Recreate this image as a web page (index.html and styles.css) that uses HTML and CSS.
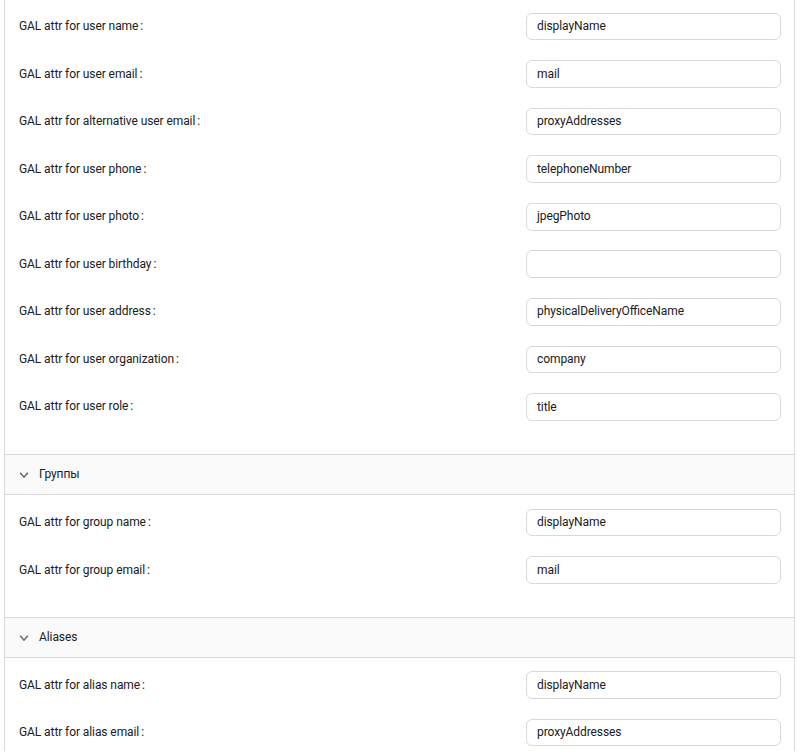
FILE: index.html
```html
<!DOCTYPE html>
<html lang="en"><head><meta charset="utf-8"><title>GAL attributes</title><link rel="stylesheet" href="styles.css"></head>
<body>
<main class="collapse">
<section class="fields users">
<div class="row"><label>GAL attr for user name</label><div class="input">displayName</div></div>
<div class="row"><label>GAL attr for user email</label><div class="input">mail</div></div>
<div class="row"><label>GAL attr for alternative user email</label><div class="input">proxyAddresses</div></div>
<div class="row"><label>GAL attr for user phone</label><div class="input">telephoneNumber</div></div>
<div class="row"><label>GAL attr for user photo</label><div class="input">jpegPhoto</div></div>
<div class="row"><label>GAL attr for user birthday</label><div class="input"></div></div>
<div class="row"><label>GAL attr for user address</label><div class="input">physicalDeliveryOfficeName</div></div>
<div class="row"><label>GAL attr for user organization</label><div class="input">company</div></div>
<div class="row"><label>GAL attr for user role</label><div class="input">title</div></div>
</section>
<header class="head"><svg class="chevron" viewBox="0 0 10 10"><path d="M1.2 2.8 5 7.2 8.8 2.8"/></svg><span>Группы</span></header>
<section class="fields groups">
<div class="row"><label>GAL attr for group name</label><div class="input">displayName</div></div>
<div class="row"><label>GAL attr for group email</label><div class="input">mail</div></div>
</section>
<header class="head"><svg class="chevron" viewBox="0 0 10 10"><path d="M1.2 2.8 5 7.2 8.8 2.8"/></svg><span>Aliases</span></header>
<section class="fields aliases">
<div class="row"><label>GAL attr for alias name</label><div class="input">displayName</div></div>
<div class="row"><label>GAL attr for alias email</label><div class="input">proxyAddresses</div></div>
</section>
</main>
</body></html>
```
FILE: styles.css
```css
* { box-sizing: border-box; }
body { margin: 0; background: #fff; color: #202020; font: 12px/20px Roboto, sans-serif; letter-spacing: -0.085px; font-feature-settings: "liga" 1; }
.collapse { width: 791px; height: 751px; margin-left: 4px; border: solid #d9d9d9; border-width: 0 1px; overflow: hidden; }
.fields { padding: 12.8px 13px 0 14px; }
.users { height: 454px; }
.groups { height: 122px; padding-top: 13.8px; }
.aliases { padding-top: 13.3px; }
.row { display: flex; justify-content: space-between; align-items: center; height: 27.6px; margin-bottom: 19.95px; }
.row label { padding-bottom: 1px; }
.row label::after { content: ":"; margin-left: 2px; }
.input { width: 255px; height: 27.6px; padding: 2.5px 10px; border: 1px solid #d9d9d9; border-radius: 6px; }
.head { display: flex; align-items: center; height: 41px; padding-left: 14px; background: #fafafa; border: solid #d9d9d9; border-width: 1px 0; }
.head span { padding-bottom: 1px; }
.chevron { width: 10px; height: 10px; margin-right: 10px; fill: none; stroke: #666; stroke-width: 1.5; }
```
